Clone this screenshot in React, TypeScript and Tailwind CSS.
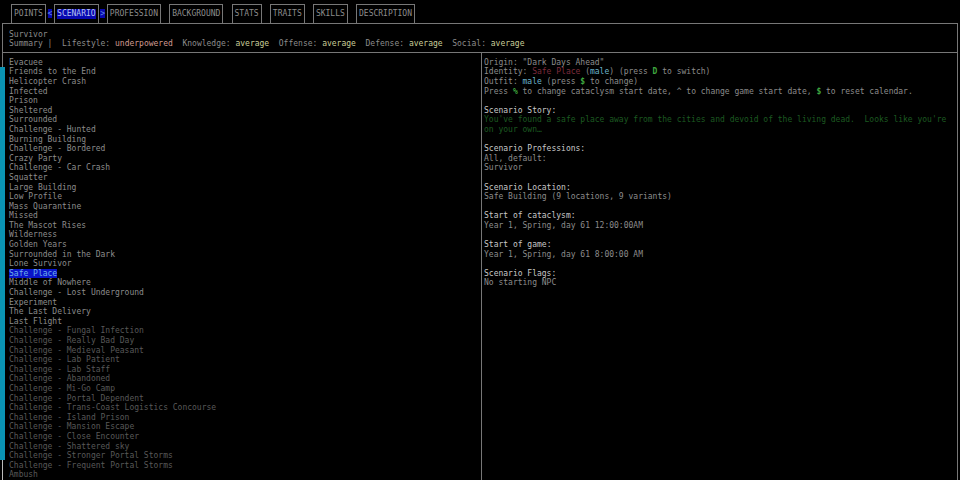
import { Fragment, type ReactNode } from "react";

const TABS = [
  "POINTS",
  "SCENARIO",
  "PROFESSION",
  "BACKGROUND",
  "STATS",
  "TRAITS",
  "SKILLS",
  "DESCRIPTION",
];
const ACTIVE_TAB = 1;

const SUMMARY = [
  { label: "Lifestyle", value: "underpowered", tone: "text-[#d09a90]" },
  { label: "Knowledge", value: "average", tone: "text-[#c9cd98]" },
  { label: "Offense", value: "average", tone: "text-[#c9cd98]" },
  { label: "Defense", value: "average", tone: "text-[#c9cd98]" },
  { label: "Social", value: "average", tone: "text-[#c9cd98]" },
];

const AVAILABLE = [
  "Evacuee",
  "Friends to the End",
  "Helicopter Crash",
  "Infected",
  "Prison",
  "Sheltered",
  "Surrounded",
  "Challenge - Hunted",
  "Burning Building",
  "Challenge - Bordered",
  "Crazy Party",
  "Challenge - Car Crash",
  "Squatter",
  "Large Building",
  "Low Profile",
  "Mass Quarantine",
  "Missed",
  "The Mascot Rises",
  "Wilderness",
  "Golden Years",
  "Surrounded in the Dark",
  "Lone Survivor",
  "Safe Place",
  "Middle of Nowhere",
  "Challenge - Lost Underground",
  "Experiment",
  "The Last Delivery",
  "Last Flight",
];

const LOCKED = [
  "Challenge - Fungal Infection",
  "Challenge - Really Bad Day",
  "Challenge - Medieval Peasant",
  "Challenge - Lab Patient",
  "Challenge - Lab Staff",
  "Challenge - Abandoned",
  "Challenge - Mi-Go Camp",
  "Challenge - Portal Dependent",
  "Challenge - Trans-Coast Logistics Concourse",
  "Challenge - Island Prison",
  "Challenge - Mansion Escape",
  "Challenge - Close Encounter",
  "Challenge - Shattered sky",
  "Challenge - Stronger Portal Storms",
  "Challenge - Frequent Portal Storms",
  "Ambush",
];

const SELECTED = "Safe Place";

const STORY =
  "You've found a safe place away from the cities and devoid of the living dead.  Looks like you're on your own…";

function Key({ children }: { children: ReactNode }) {
  return <kbd className="font-[inherit] font-bold text-[#3fa83f]">{children}</kbd>;
}

function Section({ title, children }: { title: string; children: ReactNode }) {
  return (
    <section className="mt-[1.2em]">
      <h2 className="text-[#c8c8c8]">{title}:</h2>
      {children}
    </section>
  );
}

// Space between two tabs, holds the arrow when next to the active one
function Gap({ arrow }: { arrow?: string }) {
  return (
    <span aria-hidden="true" className="w-[1.7ch] pb-1 text-center">
      {arrow && <span className="bg-[#0808b0] text-[#5f86e0]">{arrow}</span>}
    </span>
  );
}

function Tabs() {
  return (
    <nav className="flex items-end pl-[11px] pt-1">
      {TABS.map((tab, i) => (
        <Fragment key={tab}>
          {i > 0 && (
            <Gap arrow={i === ACTIVE_TAB ? "<" : i === ACTIVE_TAB + 1 ? ">" : undefined} />
          )}
          <button
            type="button"
            aria-current={i === ACTIVE_TAB ? "page" : undefined}
            className="border border-b-0 border-[#777] px-0.5 py-1"
          >
            <span className={i === ACTIVE_TAB ? "block bg-[#0808b0] text-[#b4c0f0]" : "block"}>
              {tab}
            </span>
          </button>
        </Fragment>
      ))}
    </nav>
  );
}

function ScenarioList() {
  return (
    <ul className="pl-1 pt-[5px]">
      {AVAILABLE.map((name) => (
        <li key={name}>
          <button
            type="button"
            className={name === SELECTED ? "block bg-[#0a14c8] text-[#6fb0e8]" : "block"}
          >
            {name}
          </button>
        </li>
      ))}
      {LOCKED.map((name) => (
        <li key={name}>
          <button type="button" className="block text-[#585858]">
            {name}
          </button>
        </li>
      ))}
    </ul>
  );
}

function Details() {
  return (
    <div className="ml-px mr-0.5 flex-1 whitespace-pre-wrap border-x border-[#777] pl-0.5 pr-2 pt-[5px]">
      <p>Origin: "Dark Days Ahead"</p>
      <p>
        Identity: <span className="text-[#7c2c3c]">Safe Place</span> (
        <span className="text-[#6cb4cc]">male</span>) (press <Key>D</Key> to switch)
      </p>
      <p>
        Outfit: <span className="text-[#6cb4cc]">male</span> (press <Key>$</Key> to change)
      </p>
      <p>
        Press <Key>%</Key> to change cataclysm start date, ^ to change game start date,{" "}
        <Key>$</Key> to reset calendar.
      </p>
      <Section title="Scenario Story">
        <p className="text-[#1c5a20]">{STORY}</p>
      </Section>
      <Section title="Scenario Professions">
        <p>All, default:</p>
        <p>Survivor</p>
      </Section>
      <Section title="Scenario Location">
        <p>Safe Building (9 locations, 9 variants)</p>
      </Section>
      <Section title="Start of cataclysm">
        <p>Year 1, Spring, day 61 12:00:00AM</p>
      </Section>
      <Section title="Start of game">
        <p>Year 1, Spring, day 61 8:00:00 AM</p>
      </Section>
      <Section title="Scenario Flags">
        <p>No starting NPC</p>
      </Section>
    </div>
  );
}

export default function App() {
  return (
    <main className="flex min-h-screen flex-col bg-black font-['DejaVu_Sans_Mono',monospace] text-[8px] leading-[1.2] text-[#8c8c8c]">
      <Tabs />
      <header className="mx-0.5 border border-[#777] pb-[3px] pl-1.5 pt-1.5">
        <p>Survivor</p>
        <p className="whitespace-pre">
          Summary |
          {SUMMARY.map((s) => (
            <span key={s.label}>
              {"  "}
              {s.label}: <span className={s.tone}>{s.value}</span>
            </span>
          ))}
        </p>
      </header>
      <div className="flex flex-1">
        <div className="flex w-1/2">
          <div className="flex w-[5px] flex-col items-center">
            <div className="h-[14px] w-px bg-[#777]" />
            <div className="w-full flex-1 bg-[#0a94b4]" />
            <div className="h-5 w-px bg-[#bbb]" />
          </div>
          <ScenarioList />
        </div>
        <Details />
      </div>
    </main>
  );
}
